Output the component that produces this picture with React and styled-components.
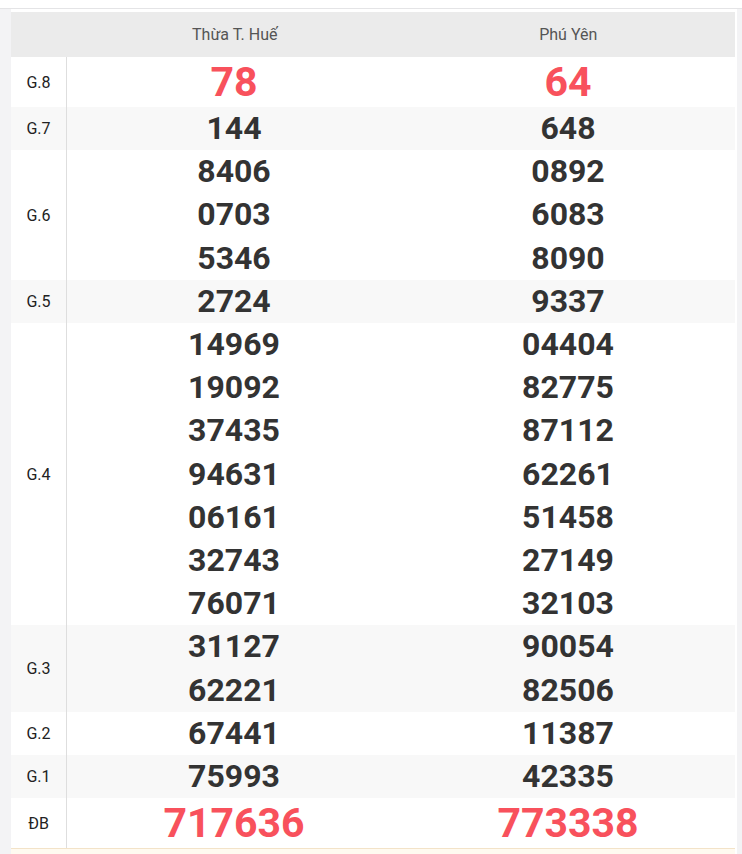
import styled, { createGlobalStyle } from "styled-components";

const GlobalStyle = createGlobalStyle`
  body {
    margin: 0;
    background: #f3f3f5;
    font-family: Roboto, "Liberation Sans", Arial, sans-serif;
  }
`;

const results = [
  { label: "G.8", big: true, values: [["78"], ["64"]] },
  { label: "G.7", values: [["144"], ["648"]] },
  { label: "G.6", values: [["8406", "0703", "5346"], ["0892", "6083", "8090"]] },
  { label: "G.5", values: [["2724"], ["9337"]] },
  {
    label: "G.4",
    values: [
      ["14969", "19092", "37435", "94631", "06161", "32743", "76071"],
      ["04404", "82775", "87112", "62261", "51458", "27149", "32103"],
    ],
  },
  { label: "G.3", values: [["31127", "62221"], ["90054", "82506"]] },
  { label: "G.2", values: [["67441"], ["11387"]] },
  { label: "G.1", values: [["75993"], ["42335"]] },
  { label: "ĐB", big: true, values: [["717636"], ["773338"]] },
];

export default function App() {
  return (
    <>
      <GlobalStyle />
      <TopStrip />
      <Main>
        <Panel>
          <ResultTable>
            <HeaderRow>
              <span />
              <HeaderCell>Thừa T. Huế</HeaderCell>
              <HeaderCell>Phú Yên</HeaderCell>
            </HeaderRow>
            {results.map((row, index) => (
              <PrizeRow key={row.label} $striped={index % 2 === 1}>
                <Label>{row.label}</Label>
                {row.values.map((column, colIndex) => (
                  <NumberCell key={colIndex}>
                    {column.map((number) => (
                      <Number key={number} $big={row.big}>
                        {number}
                      </Number>
                    ))}
                  </NumberCell>
                ))}
              </PrizeRow>
            ))}
          </ResultTable>
          <Footer />
        </Panel>
      </Main>
    </>
  );
}

const TopStrip = styled.div`
  height: 8px;
  background: #fff;
  border-bottom: 1px solid #e4e4e6;
`;

const Main = styled.div`
  padding: 0 5px 0 11px;
`;

const Panel = styled.div`
  background: #fff;
  padding: 3px 2px 0 0;
`;

const ResultTable = styled.div`
  display: flex;
  flex-direction: column;
`;

const HeaderRow = styled.div`
  display: grid;
  grid-template-columns: 57px 1fr 1fr;
  height: 45px;
  align-items: center;
  background: #ebebeb;
`;

const HeaderCell = styled.div`
  text-align: center;
  font-size: 16px;
  color: #555;
`;

const PrizeRow = styled.div`
  display: grid;
  grid-template-columns: 56px 1fr 1fr;
  background: ${(props) => (props.$striped ? "#f8f8f8" : "#fff")};
`;

const Label = styled.div`
  display: flex;
  align-items: center;
  justify-content: center;
  font-size: 16px;
  color: #222;
  border-right: 1px solid #dedede;
`;

const NumberCell = styled.div`
  display: flex;
  flex-direction: column;
  align-items: center;
`;

const Number = styled.div`
  font-weight: 700;
  color: ${(props) => (props.$big ? "#f8515c" : "#333")};
  font-size: ${(props) => (props.$big ? "41px" : "32px")};
  line-height: ${(props) => (props.$big ? "50px" : "43.2px")};
`;

const Footer = styled.div`
  height: 20px;
  background: #fffaf0;
  border-top: 1px solid #f3e3c8;
`;
